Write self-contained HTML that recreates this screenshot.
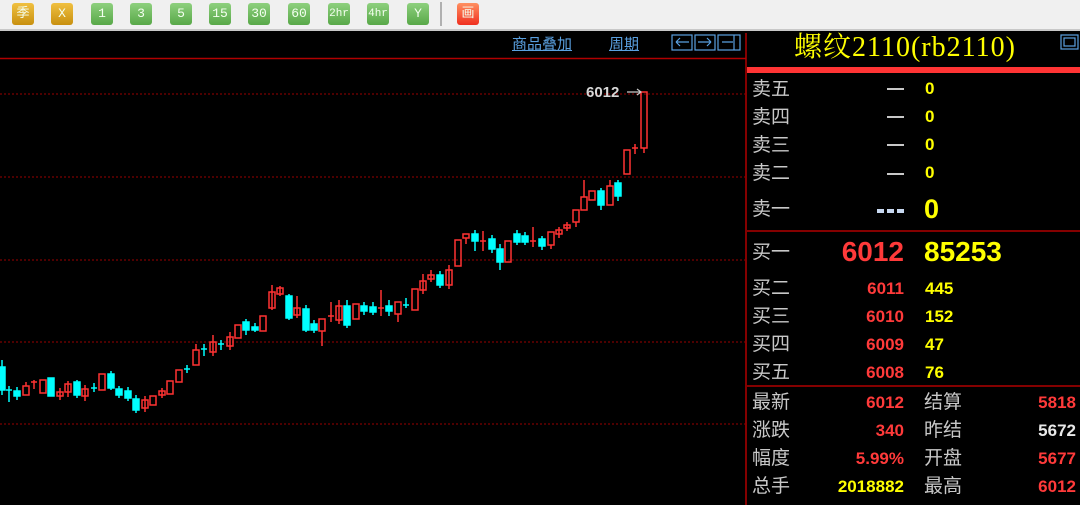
<!DOCTYPE html>
<html><head><meta charset="utf-8"><style>
*{margin:0;padding:0;box-sizing:border-box}
body{width:1080px;height:505px;overflow:hidden;background:#000;position:relative;font-family:"Liberation Sans","Noto Sans CJK SC",sans-serif}
#tb{position:absolute;left:0;top:0;width:1080px;height:31px;background:#f0f0f0;border-bottom:2px solid #c8c8c8}
.b{position:absolute;top:3px;width:22px;height:22px;border-radius:3px;color:#f4fff0;font-size:13px;text-align:center;line-height:22px;font-family:"Liberation Mono","Noto Sans CJK SC",monospace}
.g{background:linear-gradient(#8ed07e,#58a848)}
.o{background:linear-gradient(#f0c040,#c89010)}
.t{position:absolute;white-space:nowrap;line-height:1}
.l{color:#c8c8c8;font-size:19px;font-family:"Liberation Sans","Noto Sans CJK SC",sans-serif}
.r{color:#ff3a3a;font-weight:bold;font-size:17px;text-align:right}
.y{color:#ffff00;font-weight:bold;font-size:17px}
.w{color:#e8e8e8;font-weight:bold;font-size:17px;text-align:right}
</style></head><body>
<div id="tb">
<div class="b o" style="left:12px">季</div>
<div class="b o" style="left:51px">X</div>
<div class="b g" style="left:91px">1</div>
<div class="b g" style="left:130px">3</div>
<div class="b g" style="left:170px">5</div>
<div class="b g" style="left:209px">15</div>
<div class="b g" style="left:248px">30</div>
<div class="b g" style="left:288px">60</div>
<div class="b g" style="left:328px;font-size:11px">2hr</div>
<div class="b g" style="left:367px;font-size:11px">4hr</div>
<div class="b g" style="left:407px">Y</div>
<div style="position:absolute;left:440px;top:2px;width:2px;height:24px;background:#b0b0b0"></div>
<div class="b" style="left:457px;background:linear-gradient(#ff9060,#f03020)">画</div>
</div>
<svg width="1080" height="505" style="position:absolute;left:0;top:0">
<g stroke="#9a0000" stroke-dasharray="2,2" stroke-width="1">
<line x1="0" y1="94" x2="745" y2="94"/><line x1="0" y1="177" x2="745" y2="177"/><line x1="0" y1="260" x2="745" y2="260"/><line x1="0" y1="342" x2="745" y2="342"/><line x1="0" y1="424" x2="745" y2="424"/>
</g>
<line x1="0" y1="58.5" x2="746" y2="58.5" stroke="#b00000" stroke-width="1.5"/>
<line x1="746" y1="33" x2="746" y2="505" stroke="#b00000" stroke-width="1.5"/>
<rect x="747" y="67" width="333" height="6" fill="#ff3434"/>
<line x1="747" y1="231" x2="1080" y2="231" stroke="#b00000" stroke-width="1.5"/>
<line x1="747" y1="386" x2="1080" y2="386" stroke="#b00000" stroke-width="1.5"/>
<g fill="none" stroke="#5aa0e0" stroke-width="1.2">
<rect x="672" y="35" width="20" height="15"/><rect x="695" y="35" width="20" height="15"/><rect x="718" y="35" width="22" height="15"/>
<path d="M676 42h13M676 42l4-4M676 42l4 4M711 42h-13M711 42l-4-4M711 42l-4 4M734 35v15M722 42h11"/>
<rect x="1061" y="35" width="17" height="14"/><rect x="1064" y="38" width="11" height="8"/>
</g>
<g id="c" stroke-width="1.5">
<g stroke="#00ffff" fill="#00ffff">
<rect x="-1" y="367" width="6" height="23"/><line x1="2" y1="360" x2="2" y2="395"/>
<line x1="6" y1="390" x2="12" y2="390"/><line x1="9" y1="386" x2="9" y2="402"/>
<rect x="14" y="391" width="6" height="5"/><line x1="17" y1="387" x2="17" y2="400"/>
<rect x="48" y="378" width="6" height="18"/>
<rect x="74" y="382" width="6" height="13"/><line x1="77" y1="380" x2="77" y2="398"/>
<line x1="91" y1="388" x2="97" y2="388"/><line x1="94" y1="383" x2="94" y2="392"/>
<rect x="108" y="374" width="6" height="14"/><line x1="111" y1="371" x2="111" y2="390"/>
<rect x="116" y="389" width="6" height="6"/><line x1="119" y1="386" x2="119" y2="398"/>
<rect x="125" y="391" width="6" height="7"/><line x1="128" y1="387" x2="128" y2="401"/>
<rect x="133" y="399" width="6" height="11"/><line x1="136" y1="395" x2="136" y2="413"/>
<line x1="184" y1="369" x2="190" y2="369"/><line x1="187" y1="365" x2="187" y2="373"/>
<line x1="201" y1="349" x2="207" y2="349"/><line x1="204" y1="344" x2="204" y2="356"/>
<line x1="218" y1="344" x2="224" y2="344"/><line x1="221" y1="340" x2="221" y2="350"/>
<rect x="243" y="322" width="6" height="8"/><line x1="246" y1="319" x2="246" y2="335"/>
<rect x="252" y="327" width="6" height="3"/><line x1="255" y1="323" x2="255" y2="332"/>
<rect x="286" y="296" width="6" height="22"/><line x1="289" y1="294" x2="289" y2="320"/>
<rect x="303" y="309" width="6" height="21"/><line x1="306" y1="305" x2="306" y2="332"/>
<rect x="311" y="324" width="6" height="6"/><line x1="314" y1="320" x2="314" y2="333"/>
<rect x="344" y="306" width="6" height="19"/><line x1="347" y1="300" x2="347" y2="328"/>
<rect x="361" y="306" width="6" height="5"/><line x1="364" y1="302" x2="364" y2="315"/>
<rect x="370" y="307" width="6" height="5"/><line x1="373" y1="302" x2="373" y2="315"/>
<rect x="386" y="306" width="6" height="5"/><line x1="389" y1="300" x2="389" y2="316"/>
<line x1="403" y1="305" x2="409" y2="305"/><line x1="406" y1="298" x2="406" y2="308"/>
<rect x="437" y="275" width="6" height="10"/><line x1="440" y1="271" x2="440" y2="288"/>
<rect x="472" y="234" width="6" height="7"/><line x1="475" y1="230" x2="475" y2="251"/>
<rect x="489" y="239" width="6" height="10"/><line x1="492" y1="235" x2="492" y2="253"/>
<rect x="497" y="249" width="6" height="13"/><line x1="500" y1="244" x2="500" y2="270"/>
<rect x="514" y="234" width="6" height="8"/><line x1="517" y1="230" x2="517" y2="245"/>
<rect x="522" y="236" width="6" height="6"/><line x1="525" y1="232" x2="525" y2="245"/>
<rect x="539" y="239" width="6" height="7"/><line x1="542" y1="236" x2="542" y2="250"/>
<rect x="598" y="191" width="6" height="14"/><line x1="601" y1="188" x2="601" y2="210"/>
<rect x="615" y="183" width="6" height="13"/><line x1="618" y1="180" x2="618" y2="201"/>
</g>
<g stroke="#ff3232" fill="none">
<rect x="23" y="386" width="6" height="9"/><line x1="26" y1="382" x2="26" y2="386"/>
<line x1="31" y1="382" x2="37" y2="382"/><line x1="34" y1="380" x2="34" y2="389"/>
<rect x="40" y="380" width="6" height="13"/>
<rect x="57" y="392" width="6" height="4"/><line x1="60" y1="388" x2="60" y2="400"/>
<rect x="65" y="384" width="6" height="8"/><line x1="68" y1="381" x2="68" y2="397"/>
<rect x="82" y="389" width="6" height="7"/><line x1="85" y1="385" x2="85" y2="401"/>
<rect x="99" y="374" width="6" height="16"/>
<rect x="142" y="400" width="6" height="8"/><line x1="145" y1="396" x2="145" y2="412"/>
<rect x="150" y="396" width="6" height="9"/>
<rect x="159" y="391" width="6" height="4"/><line x1="162" y1="388" x2="162" y2="398"/>
<rect x="167" y="381" width="6" height="13"/>
<rect x="176" y="370" width="6" height="12"/>
<rect x="193" y="350" width="6" height="15"/><line x1="196" y1="344" x2="196" y2="350"/>
<rect x="210" y="342" width="6" height="10"/><line x1="213" y1="335" x2="213" y2="356"/>
<rect x="227" y="337" width="6" height="9"/><line x1="230" y1="332" x2="230" y2="350"/>
<rect x="235" y="325" width="6" height="13"/>
<rect x="260" y="316" width="6" height="15"/>
<rect x="269" y="292" width="6" height="16"/><line x1="272" y1="285" x2="272" y2="310"/>
<rect x="277" y="288" width="6" height="6"/><line x1="280" y1="286" x2="280" y2="296"/>
<rect x="294" y="308" width="6" height="7"/><line x1="297" y1="296" x2="297" y2="318"/>
<rect x="319" y="319" width="6" height="12"/><line x1="322" y1="331" x2="322" y2="346"/>
<line x1="328" y1="316" x2="334" y2="316"/><line x1="331" y1="302" x2="331" y2="322"/>
<rect x="336" y="306" width="6" height="14"/><line x1="339" y1="300" x2="339" y2="324"/>
<rect x="353" y="304" width="6" height="15"/>
<line x1="378" y1="308" x2="384" y2="308"/><line x1="381" y1="290" x2="381" y2="316"/>
<rect x="395" y="302" width="6" height="12"/><line x1="398" y1="314" x2="398" y2="322"/>
<rect x="412" y="289" width="6" height="21"/>
<rect x="420" y="281" width="6" height="9"/><line x1="423" y1="274" x2="423" y2="294"/>
<rect x="428" y="275" width="6" height="4"/><line x1="431" y1="270" x2="431" y2="282"/>
<rect x="446" y="270" width="6" height="15"/><line x1="449" y1="265" x2="449" y2="289"/>
<rect x="455" y="240" width="6" height="26"/>
<rect x="463" y="234" width="6" height="4"/><line x1="466" y1="238" x2="466" y2="244"/>
<line x1="480" y1="241" x2="486" y2="241"/><line x1="483" y1="231" x2="483" y2="251"/>
<rect x="505" y="241" width="6" height="21"/>
<line x1="530" y1="241" x2="536" y2="241"/><line x1="533" y1="227" x2="533" y2="247"/>
<rect x="548" y="232" width="6" height="13"/><line x1="551" y1="245" x2="551" y2="249"/>
<rect x="556" y="230" width="6" height="4"/><line x1="559" y1="227" x2="559" y2="238"/>
<rect x="564" y="225" width="6" height="3"/><line x1="567" y1="222" x2="567" y2="231"/>
<rect x="573" y="210" width="6" height="12"/><line x1="576" y1="222" x2="576" y2="227"/>
<rect x="581" y="197" width="6" height="13"/><line x1="584" y1="180" x2="584" y2="197"/>
<rect x="589" y="191" width="6" height="9"/>
<rect x="607" y="186" width="6" height="19"/><line x1="610" y1="180" x2="610" y2="186"/>
<rect x="624" y="150" width="6" height="24"/>
<line x1="632" y1="148" x2="638" y2="148"/><line x1="635" y1="144" x2="635" y2="154"/>
<rect x="641" y="92" width="6" height="56"/><line x1="644" y1="148" x2="644" y2="153"/>
</g>
</g>
<path d="M627 92h14M637 89l4 3-4 3" stroke="#c8c8c8" fill="none" stroke-width="1.2"/>
</svg>
<div class="t" style="left:586px;top:85px;color:#d8d8d8;font-weight:bold;font-size:15px">6012</div>
<div class="t" style="left:512px;top:37px;color:#5aa0e0;font-size:15px;text-decoration:underline;font-family:'Liberation Sans','Noto Sans CJK SC',sans-serif">商品叠加</div>
<div class="t" style="left:609px;top:37px;color:#5aa0e0;font-size:15px;text-decoration:underline;font-family:'Liberation Sans','Noto Sans CJK SC',sans-serif">周期</div>
<div class="t" style="left:794px;top:34px;color:#ffff00;font-size:28px;letter-spacing:1px;font-family:'Liberation Serif','Noto Serif CJK SC',serif">螺纹2110(rb2110)</div>

<div class="t l" style="left:752px;top:80px">卖五</div>
<div class="t l" style="left:752px;top:108px">卖四</div>
<div class="t l" style="left:752px;top:136px">卖三</div>
<div class="t l" style="left:752px;top:164px">卖二</div>
<div class="t l" style="left:752px;top:200px">卖一</div>
<div class="t" style="left:887px;top:88px;width:17px;height:1.5px;background:#c8c8c8"></div>
<div class="t" style="left:887px;top:116px;width:17px;height:1.5px;background:#c8c8c8"></div>
<div class="t" style="left:887px;top:144px;width:17px;height:1.5px;background:#c8c8c8"></div>
<div class="t" style="left:887px;top:173px;width:17px;height:1.5px;background:#c8c8c8"></div>
<div class="t y" style="left:925px;top:80px">0</div>
<div class="t y" style="left:925px;top:108px">0</div>
<div class="t y" style="left:925px;top:136px">0</div>
<div class="t y" style="left:925px;top:164px">0</div>
<div class="t" style="left:877px;top:209px;width:27px;height:4px;background:repeating-linear-gradient(90deg,#c8d8f0 0 7px,transparent 7px 10px)"></div>
<div class="t y" style="left:924px;top:196px;font-size:27px">0</div>

<div class="t l" style="left:752px;top:243px">买一</div>
<div class="t" style="left:836px;top:238px;color:#ff3a3a;font-weight:bold;font-size:28px;width:68px;text-align:right">6012</div>
<div class="t y" style="left:924px;top:238px;font-size:28px">85253</div>
<div class="t l" style="left:752px;top:279px">买二</div>
<div class="t l" style="left:752px;top:307px">买三</div>
<div class="t l" style="left:752px;top:335px">买四</div>
<div class="t l" style="left:752px;top:363px">买五</div>
<div class="t r" style="left:840px;width:64px;top:280px">6011</div>
<div class="t r" style="left:840px;width:64px;top:308px">6010</div>
<div class="t r" style="left:840px;width:64px;top:336px">6009</div>
<div class="t r" style="left:840px;width:64px;top:364px">6008</div>
<div class="t y" style="left:925px;top:280px">445</div>
<div class="t y" style="left:925px;top:308px">152</div>
<div class="t y" style="left:925px;top:336px">47</div>
<div class="t y" style="left:925px;top:364px">76</div>

<div class="t l" style="left:752px;top:393px">最新</div>
<div class="t l" style="left:752px;top:421px">涨跌</div>
<div class="t l" style="left:752px;top:449px">幅度</div>
<div class="t l" style="left:752px;top:477px">总手</div>
<div class="t r" style="left:810px;width:94px;top:394px">6012</div>
<div class="t r" style="left:810px;width:94px;top:422px">340</div>
<div class="t r" style="left:810px;width:94px;top:450px">5.99%</div>
<div class="t y" style="left:810px;width:94px;top:478px;text-align:right">2018882</div>
<div class="t l" style="left:924px;top:393px">结算</div>
<div class="t l" style="left:924px;top:421px">昨结</div>
<div class="t l" style="left:924px;top:449px">开盘</div>
<div class="t l" style="left:924px;top:477px">最高</div>
<div class="t r" style="left:1000px;width:76px;top:394px">5818</div>
<div class="t w" style="left:1000px;width:76px;top:422px">5672</div>
<div class="t r" style="left:1000px;width:76px;top:450px">5677</div>
<div class="t r" style="left:1000px;width:76px;top:478px">6012</div>
</body></html>
